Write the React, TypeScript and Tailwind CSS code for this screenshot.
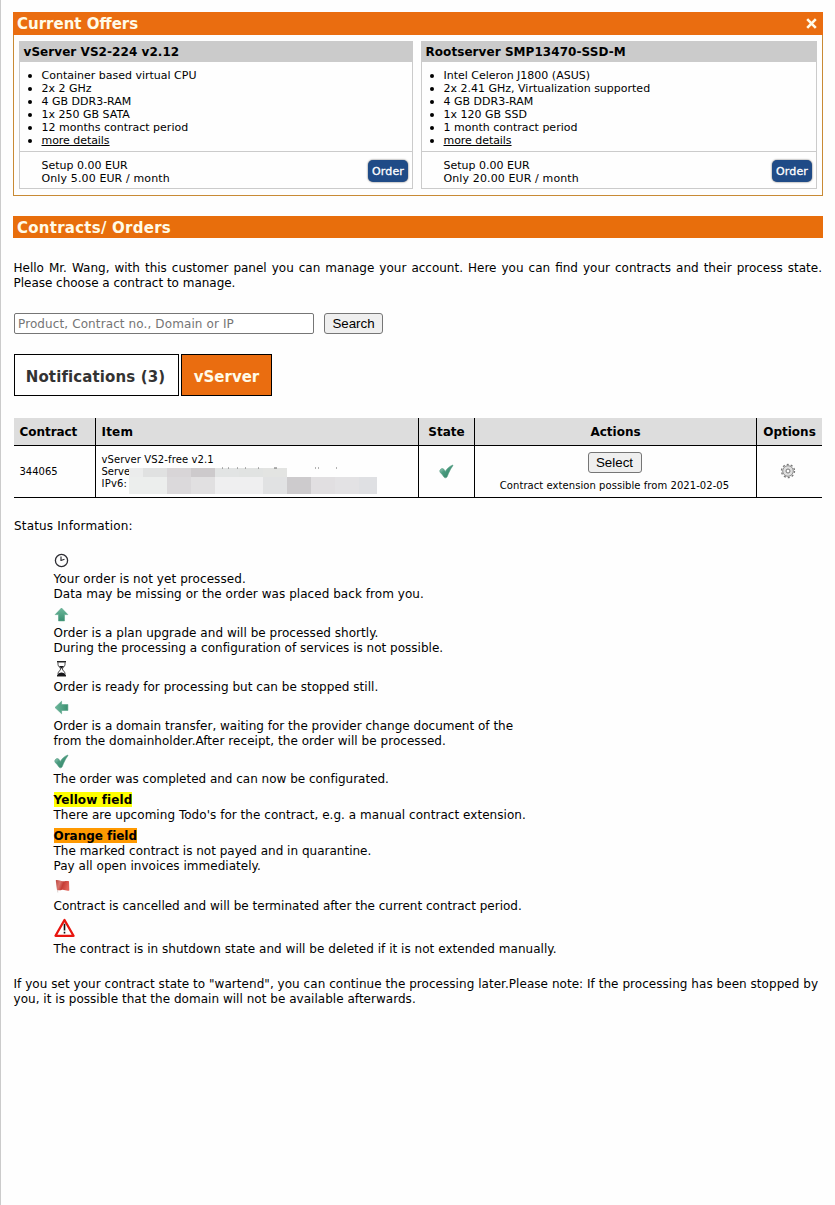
import type { ReactNode } from "react";

type Offer = {
  title: string;
  features: string[];
  price: string;
};

const offers: Offer[] = [
  {
    title: "vServer VS2-224 v2.12",
    features: ["Container based virtual CPU", "2x 2 GHz", "4 GB DDR3-RAM", "1x 250 GB SATA", "12 months contract period"],
    price: "Only 5.00 EUR / month",
  },
  {
    title: "Rootserver SMP13470-SSD-M",
    features: ["Intel Celeron J1800 (ASUS)", "2x 2.41 GHz, Virtualization supported", "4 GB DDR3-RAM", "1x 120 GB SSD", "1 month contract period"],
    price: "Only 20.00 EUR / month",
  },
];

function OfferCard({ offer, className }: { offer: Offer; className: string }) {
  return (
    <div className={`h-[148px] border border-[#cbcbcb] ${className}`}>
      <h3 className="h-5 bg-[#cbcbcb] pl-[3.500px] text-[12px] leading-[20px] font-bold tracking-[0.060px]">{offer.title}</h3>
      <ul className="flex h-[90px] flex-col border-b border-[#cbcbcb] pt-[7px] text-[11px] leading-[13px]">
        {offer.features.map((f) => (
          <Bullet key={f}>{f}</Bullet>
        ))}
        <Bullet>
          <a className="tracking-[-0.050px] underline" href="#details">more details</a>
        </Bullet>
      </ul>
      <div className="flex justify-between pr-1 pl-[21.500px] text-[11px] leading-[13px]">
        <div className="pt-[7px]">
          <div>Setup 0.00 EUR</div>
          <div className="tracking-[0.120px]">{offer.price}</div>
        </div>
        <button className="mt-2 h-[22px] w-10 rounded-[5px] bg-[#1f4b87] text-center text-[11px] tracking-[0.100px] text-white shadow-[0_0_2px_#555] [-webkit-text-stroke:0.300px_white]">
          Order
        </button>
      </div>
    </div>
  );
}

function Bullet({ children }: { children: ReactNode }) {
  return (
    <li className="flex h-[13px] items-center whitespace-nowrap">
      <span className="mt-px mr-[9.500px] ml-2 h-1 w-1 rounded-full bg-black" />
      {children}
    </li>
  );
}

function CheckIcon() {
  return (
    <svg width="15" height="15" viewBox="0 0 15 15" className="block">
      <defs>
        <linearGradient id="check" x1="0" y1="0" x2="1" y2="1">
          <stop offset="0.1" stopColor="#a5d2c2" />
          <stop offset="0.4" stopColor="#4b9c80" />
          <stop offset="1" stopColor="#2f7f62" />
        </linearGradient>
      </defs>
      <path d="M.9 6.300C1.800 4.700 3.300 4.200 4.600 5L6.300 7.400C8 4.800 10.300 2.200 14 1C13.700 2.200 12.600 3.400 11.400 5.500C10 8 9 10.500 8 13C7.200 14 5.800 14 5.200 13.300C4.200 11.600 2.300 9.500 .9 8Z" fill="url(#check)" stroke="#4a957b" strokeWidth=".6" />
    </svg>
  );
}

function ClockIcon() {
  return (
    <svg width="15" height="15" viewBox="0 0 15 15" fill="none" stroke="#2d2d33" className="block">
      <circle cx="7.500" cy="7.500" r="6.100" strokeWidth="1.300" />
      <path d="M7 3.500V8M7 7.500 10.500 6.300" strokeWidth="1.200" />
    </svg>
  );
}

function ArrowIcon({ left = false }: { left?: boolean }) {
  return (
    <svg width="15" height="15" viewBox="0 0 15 15" className={left ? "block -rotate-90" : "block"}>
      <defs>
        <linearGradient id="arrow" x1="0" y1="0" x2="0" y2="1">
          <stop offset="0" stopColor="#6db89c" />
          <stop offset="1" stopColor="#3a8f70" />
        </linearGradient>
      </defs>
      <path d="M7.500 1 13.800 7.600H10.500V13.900H4.500V7.600H1.200Z" fill="url(#arrow)" stroke="#58a488" strokeWidth=".6" />
    </svg>
  );
}

function HourglassIcon() {
  return (
    <svg width="15" height="16" viewBox="0 0 15 16" className="block">
      <path d="M3 .8H12M3 14.700H12" stroke="#222" strokeWidth="1.400" />
      <path d="M4 1.500V3.500C4 5.500 6.600 6.500 6.600 8S4 10.500 4 12.500V14.500M11 1.500V3.500C11 5.500 8.400 6.500 8.400 8S11 10.500 11 12.500V14.500" fill="none" stroke="#333" strokeWidth=".9" />
      <path d="M5 5H10L7.500 7.800ZM4 14.800V13Q5 11.500 7.500 11.500T11 13V14.800Z" fill="#16161a" />
    </svg>
  );
}

function FlagIcon() {
  return (
    <svg width="16" height="15" viewBox="0 0 16 15" className="block">
      <defs>
        <linearGradient id="flag" x1="0" y1="0" x2="1" y2="0.3">
          <stop offset="0" stopColor="#bd4540" />
          <stop offset="0.35" stopColor="#d8756d" />
          <stop offset="0.6" stopColor="#c53d35" />
          <stop offset="1" stopColor="#df6157" />
        </linearGradient>
      </defs>
      <path d="M2.200 1.800 3.800 13.500" stroke="#ddd5d3" strokeWidth="1" />
      <path d="M1.800 1.200C4.500 .5 6.500 2.500 9.500 2.200S13.500 1.800 15 2.200L15.300 11.500C12.500 12.300 10.500 10.300 7.500 10.900S4.500 11.500 3 10.800Z" fill="url(#flag)" />
    </svg>
  );
}

function WarningIcon() {
  return (
    <svg width="21" height="20" viewBox="0 0 21 20" className="block">
      <path d="M10.500 2 19.500 17.800H1.500Z" fill="#fff" stroke="#e8150f" strokeWidth="2.300" strokeLinejoin="round" />
      <path d="M10.500 5.800V12.500M10.500 13.700V15.500" stroke="#111" strokeWidth="1.600" />
    </svg>
  );
}

function GearIcon() {
  return (
    <svg width="16" height="16" viewBox="0 0 16 16" fill="none" className="block">
      <circle cx="8" cy="8" r="6.500" stroke="#777" strokeWidth="1.300" strokeDasharray="2 2.084" />
      <circle cx="8" cy="8" r="5.300" fill="#dedede" stroke="#8b8b8b" strokeWidth="1" />
      <circle cx="8" cy="8" r="2" fill="#fff" stroke="#777" strokeWidth="1" />
    </svg>
  );
}

const redactedTop = ["w-[14px] bg-[#ebecec]", "w-6 bg-[#e0e1e1]", "w-6 bg-[#d8d5d7]", "w-6 bg-[#cdcacc]", "w-6 bg-[#e2e4e4]", "w-6 bg-[#e1e3e2]", "w-6 bg-[#e3e4e2]"];
const redactedBottom = ["w-[38px] bg-[#eceeed]", "w-6 bg-[#dbd9db]", "w-6 bg-[#e1e0e1]", "w-12 bg-[#efeff0]", "w-6 bg-[#e1e2e3]", "w-6 bg-[#cdcbcd]", "w-6 bg-[#e1dfe1]", "w-6 bg-[#e3e2e4]", "w-[18px] bg-[#dfe0e3]"];

export default function App() {
  return (
    <main className="h-[1205px] w-[835px] border-l border-[#cbcbcb] bg-[#fefefe] pt-3 pl-3 font-['DejaVu_Sans',sans-serif] text-[12px] leading-[17px] text-black">
      <section className="h-[184px] w-[810px] border border-[#c88a35]">
        <header className="-mx-px -mt-px flex h-[23px] items-center justify-between bg-[#ea6d10] pr-[6px] pl-1 text-[15px] leading-[23px] font-bold text-[#fffbe8]">
          <h2 className="pt-px">Current Offers</h2>
          <svg width="11" height="11" viewBox="0 0 11 11" stroke="#fffbe8" strokeWidth="2.600"><path d="M1.200 1.200 9.800 9.800M9.800 1.200 1.200 9.800" /></svg>
        </header>
        <div className="flex gap-2 pt-[6px] pl-[5px]">
          <OfferCard offer={offers[0]} className="w-[394px]" />
          <OfferCard offer={offers[1]} className="w-[396px]" />
        </div>
      </section>

      <h2 className="mt-5 h-[22px] w-[810px] bg-[#e86e0c] pl-1 text-[15px] leading-[24px] font-bold tracking-[0.250px] text-[#fffbe8]">Contracts/ Orders</h2>

      <div className="w-[809px] pl-px">
        <div className="mt-[22px] -ml-[0.500px] whitespace-nowrap">
          <p className="h-[15px] [text-align-last:justify]">Hello Mr. Wang, with this customer panel you can manage your account. Here you can find your contracts and their process state.</p>
          <p className="h-[15px] tracking-[-0.020px]">Please choose a contract to manage.</p>
        </div>

        <form className="mt-[23px] flex gap-[10px]">
          <input className="h-[21px] w-[300px] rounded-[2px] border border-[#767676] bg-white px-[3px] text-[12px] tracking-[0.110px] placeholder:text-[#757575] placeholder:opacity-100" placeholder="Product, Contract no., Domain or IP" />
          <button type="button" className="h-[21px] w-[59px] rounded-[3px] border border-[#767676] bg-[#efefef] font-['Liberation_Sans',sans-serif] text-[13.333px] leading-[19px]">Search</button>
        </form>

        <nav className="mt-5 flex gap-[2px] text-[15px] font-bold">
          <button className="h-[42px] w-[165px] border border-black bg-white pt-1 pr-[2px] tracking-[0.120px] whitespace-nowrap text-[#333]">Notifications (3)</button>
          <button className="h-[42px] w-[91px] border border-black bg-[#ea6d10] pt-1 text-[#fffbe8]">vServer</button>
        </nav>

        <div className="mt-[22px] grid grid-cols-[81px_323px_56px_282px_66px] grid-rows-[28px_52px] text-[10px] leading-[12px] *:border-b *:border-black [&>*:not(:nth-child(5n+1))]:border-l">
          <div className="bg-[#dddddd] pl-[5.500px] text-[12px] leading-[28px] font-bold tracking-[-0.050px]">Contract</div>
          <div className="bg-[#dddddd] pl-[5.500px] text-[12px] leading-[28px] font-bold tracking-[0.200px]">Item</div>
          <div className="bg-[#dddddd] text-center text-[12px] leading-[28px] font-bold">State</div>
          <div className="bg-[#dddddd] text-center text-[12px] leading-[28px] font-bold">Actions</div>
          <div className="bg-[#dddddd] text-center text-[12px] leading-[28px] font-bold">Options</div>

          <div className="flex items-center pl-[5.500px]">344065</div>
          <div className="relative pt-2 pl-[5.500px]">
            <p className="tracking-[0.120px]">vServer VS2-free v2.1</p>
            <p>Serve</p>
            <p className="tracking-[0.200px]">IPv6:</p>
            <div className="absolute top-[22px] left-[33px]">
              <div className="flex h-[9px]">
                {redactedTop.map((c) => <span key={c} className={c} />)}
              </div>
              <div className="flex h-[17px]">
                {redactedBottom.map((c) => <span key={c} className={c} />)}
              </div>
            </div>
            <svg className="absolute top-[21px] left-[125px]" width="122" height="2" viewBox="0 0 122 2">
              <path d="M1 1H2M7 1H8M16 1H17M24 1H25M37 1H38M53 1H56M94 1H95M97 1H98M115 1H116" stroke="#666" strokeWidth="1" />
            </svg>
          </div>
          <div className="flex items-center justify-center"><CheckIcon /></div>
          <div className="flex flex-col items-center pt-[6px] pr-[2px]">
            <button className="h-[21px] w-[54px] rounded-[3px] border border-[#767676] bg-[#efefef] font-['Liberation_Sans',sans-serif] text-[13.333px] leading-[19px]">Select</button>
            <p className="mt-[7px] tracking-[0.060px] whitespace-nowrap">Contract extension possible from 2021-02-05</p>
          </div>
          <div className="flex items-center justify-center pr-[3px] pb-px"><GearIcon /></div>
        </div>

        <p className="mt-5 h-[15px] tracking-[0.160px]">Status Information:</p>

        <dl className="mt-5 ml-[39.500px] flex flex-col items-start tracking-[0.030px] whitespace-nowrap [&>dd]:h-[15px]">
          <dt className="h-[18px]"><ClockIcon /></dt>
          <dd className="tracking-[0.070px]">Your order is not yet processed.</dd>
          <dd className="tracking-[0.050px]">Data may be missing or the order was placed back from you.</dd>
          <dt className="h-6 pt-[6px]"><ArrowIcon /></dt>
          <dd>Order is a plan upgrade and will be processed shortly.</dd>
          <dd className="tracking-[0.010px]">During the processing a configuration of services is not possible.</dd>
          <dt className="h-6 pt-[6px]"><HourglassIcon /></dt>
          <dd>Order is ready for processing but can be stopped still.</dd>
          <dt className="h-6 pt-[6px]"><ArrowIcon left /></dt>
          <dd className="tracking-[0.010px]">Order is a domain transfer, waiting for the provider change document of the</dd>
          <dd className="tracking-[0.040px]">from the domainholder.After receipt, the order will be processed.</dd>
          <dt className="h-[23px] pt-[6px]"><CheckIcon /></dt>
          <dd className="tracking-[-0.010px]">The order was completed and can now be configurated.</dd>
          <dt className="mt-[6px] h-[15px] bg-[#ffff00] font-bold tracking-[0.100px]">Yellow field</dt>
          <dd className="tracking-[0.040px]">There are upcoming Todo's for the contract, e.g. a manual contract extension.</dd>
          <dt className="mt-[6px] h-[15px] bg-[#ff9900] font-bold tracking-[-0.030px]">Orange field</dt>
          <dd className="tracking-[0.010px]">The marked contract is not payed and in quarantine.</dd>
          <dd>Pay all open invoices immediately.</dd>
          <dt className="h-[25px] pt-[6px]"><FlagIcon /></dt>
          <dd className="tracking-[0.010px]">Contract is cancelled and will be terminated after the current contract period.</dd>
          <dt className="h-7 pt-[5px]"><WarningIcon /></dt>
          <dd>The contract is in shutdown state and will be deleted if it is not extended manually.</dd>
        </dl>

        <div className="mt-5 -ml-[0.500px] tracking-[0.042px] whitespace-nowrap [&>p]:h-[15px]">
          <p>If you set your contract state to "wartend", you can continue the processing later.Please note: If the processing has been stopped by</p>
          <p className="tracking-[0.030px]">you, it is possible that the domain will not be available afterwards.</p>
        </div>
      </div>
    </main>
  );
}
